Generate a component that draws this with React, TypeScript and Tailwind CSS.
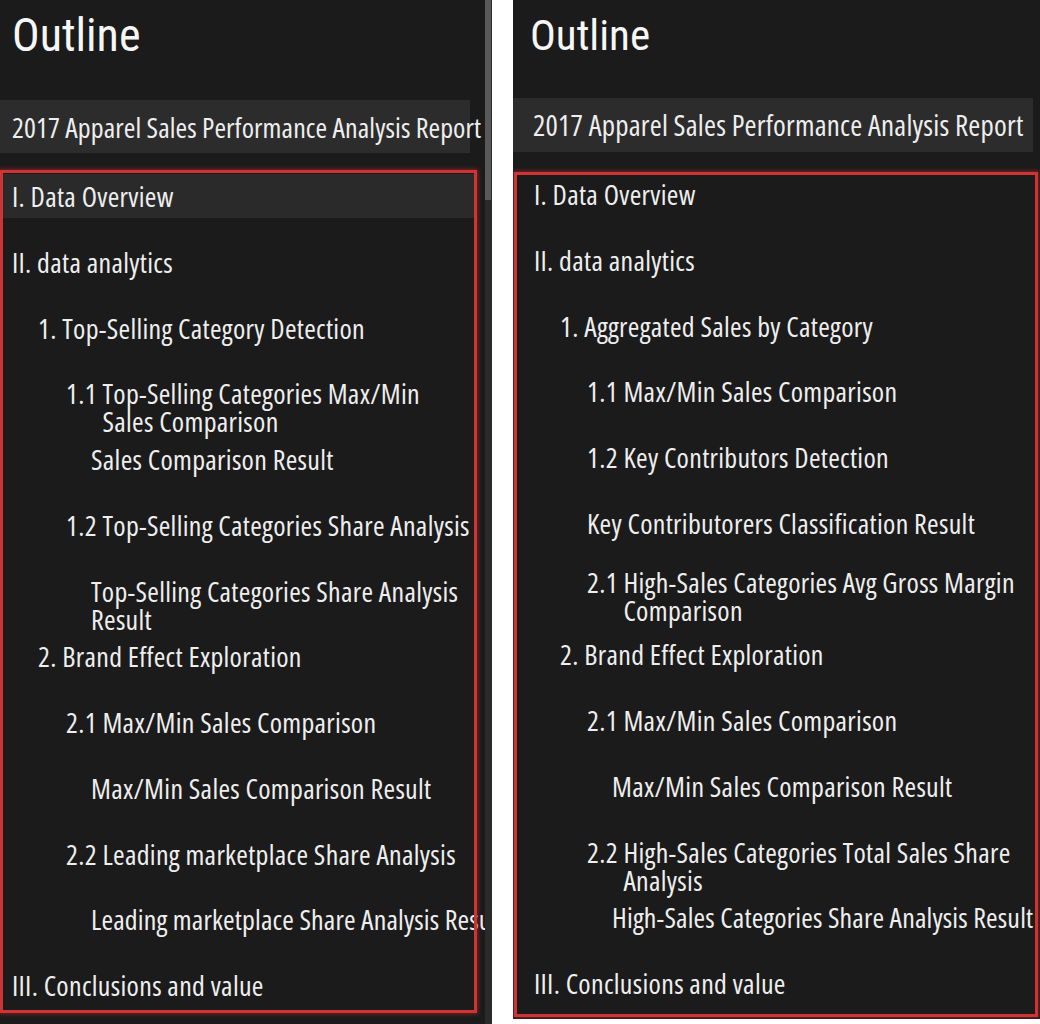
type Item = {
  pad: string;
  lines: string[];
  num?: string;
  active?: boolean;
  up?: boolean;
  tight?: boolean;
};

const leftItems: Item[] = [
  { pad: "pl-[12px]", lines: ["I. Data Overview"], active: true },
  { pad: "pl-[12px]", lines: ["II. data analytics"] },
  { pad: "pl-[38px]", lines: ["1. Top-Selling Category Detection"] },
  { pad: "pl-[66px]", num: "1.1", lines: ["Top-Selling Categories Max/Min", "Sales Comparison"] },
  { pad: "pl-[91px]", lines: ["Sales Comparison Result"] },
  { pad: "pl-[66px]", num: "1.2", lines: ["Top-Selling Categories Share Analysis"] },
  { pad: "pl-[91px]", lines: ["Top-Selling Categories Share Analysis", "Result"] },
  { pad: "pl-[38px]", lines: ["2. Brand Effect Exploration"] },
  { pad: "pl-[66px]", num: "2.1", lines: ["Max/Min Sales Comparison"] },
  { pad: "pl-[91px]", lines: ["Max/Min Sales Comparison Result"] },
  { pad: "pl-[66px]", num: "2.2", lines: ["Leading marketplace Share Analysis"] },
  { pad: "pl-[91px]", lines: ["Leading marketplace Share Analysis Result"], tight: true },
  { pad: "pl-[12px]", lines: ["III. Conclusions and value"] },
];

const rightItems: Item[] = [
  { pad: "pl-[21px]", lines: ["I. Data Overview"] },
  { pad: "pl-[21px]", lines: ["II. data analytics"] },
  { pad: "pl-[47px]", lines: ["1. Aggregated Sales by Category"] },
  { pad: "pl-[74px]", num: "1.1", lines: ["Max/Min Sales Comparison"] },
  { pad: "pl-[74px]", num: "1.2", lines: ["Key Contributors Detection"] },
  { pad: "pl-[74px]", lines: ["Key Contributorers Classification Result"] },
  { pad: "pl-[74px]", num: "2.1", lines: ["High-Sales Categories Avg Gross Margin", "Comparison"], up: true },
  { pad: "pl-[47px]", lines: ["2. Brand Effect Exploration"] },
  { pad: "pl-[74px]", num: "2.1", lines: ["Max/Min Sales Comparison"] },
  { pad: "pl-[99px]", lines: ["Max/Min Sales Comparison Result"] },
  { pad: "pl-[74px]", num: "2.2", lines: ["High-Sales Categories Total Sales Share", "Analysis"] },
  { pad: "pl-[99px]", lines: ["High-Sales Categories Share Analysis Result"], tight: true },
  { pad: "pl-[21px]", lines: ["III. Conclusions and value"] },
];

const font = { fontFamily: '"Open Sans", "Noto Sans", sans-serif' };
const titleFont = { fontFamily: 'Roboto, "Open Sans", sans-serif' };

function OutlineRow({ item, width }: { item: Item; width: string }) {
  return (
    <div className="h-[65.75px] shrink-0">
      <div
        className={
          "flex min-h-[44px] whitespace-nowrap text-[28px] leading-[28px] font-stretch-condensed text-[#eeeeee] " +
          item.pad +
          " " +
          width +
          (item.tight ? " tracking-[0.15px]" : " tracking-[0.3px]") +
          (item.up ? " pt-[1px]" : " pt-[8px]") +
          (item.active ? " bg-[#2a2a2a]" : "")
        }
      >
        {item.num && <span className="shrink-0 self-start">{item.num}&nbsp;</span>}
        <div className="flex flex-col">
          {item.lines.map((l) => (
            <span key={l}>{l}</span>
          ))}
        </div>
      </div>
    </div>
  );
}

export default function App() {
  return (
    <div className="flex h-[1024px] w-[1040px] bg-white" style={font}>
      {/* left window */}
      <div className="flex h-[1024px] w-[492px] shrink-0 bg-[#1b1b1b]">
        <div className="flex w-[485px] flex-col overflow-hidden">
          <div
            className="h-[100px] shrink-0 pl-[12px] pt-[12px] text-[46px] leading-[46px] font-stretch-condensed text-[#f6f6f6]"
            style={titleFont}
          >
            Outline
          </div>
          <div className="flex h-[53px] w-[470px] shrink-0 items-center whitespace-nowrap bg-[#2c2c2c] pl-[12px] text-[28px] tracking-[0.1px] font-stretch-condensed text-[#eeeeee]">
            2017 Apparel Sales Performance Analysis Report
          </div>
          <div className="relative mt-[21px] flex shrink-0 flex-col">
            {leftItems.map((it, i) => (
              <OutlineRow key={i} item={it} width="w-[476px]" />
            ))}
            <div className="pointer-events-none absolute left-0 top-[-4px] h-[843px] w-[477px] border-[3px] border-[#cf3434] shadow-[0_0_4px_1px_rgba(210,40,40,0.55)]" />
          </div>
        </div>
        <div className="flex w-[7px] flex-col bg-[#2a2a2a]">
          <div className="h-[200px] w-[6px] bg-[#595959]" />
        </div>
      </div>

      <div className="w-[21px] shrink-0" />

      {/* right window */}
      <div className="flex h-[1019px] w-[527px] shrink-0 flex-col overflow-hidden bg-[#1b1b1b]">
        <div
          className="h-[98px] shrink-0 pl-[17px] pt-[14px] text-[43px] leading-[43px] font-stretch-condensed text-[#f6f6f6]"
          style={titleFont}
        >
          Outline
        </div>
        <div className="flex h-[54px] w-[520px] shrink-0 items-center whitespace-nowrap bg-[#2c2c2c] pl-[20px] text-[29px] tracking-[0.2px] font-stretch-condensed text-[#eeeeee]">
          2017 Apparel Sales Performance Analysis Report
        </div>
        <div className="relative mt-[20px] flex shrink-0 flex-col">
          {rightItems.map((it, i) => (
            <OutlineRow key={i} item={it} width="w-[527px]" />
          ))}
          <div className="pointer-events-none absolute left-[1px] top-0 h-[845px] w-[524px] border-[3px] border-[#cf3434] shadow-[0_0_4px_1px_rgba(210,40,40,0.55)]" />
        </div>
      </div>
    </div>
  );
}
